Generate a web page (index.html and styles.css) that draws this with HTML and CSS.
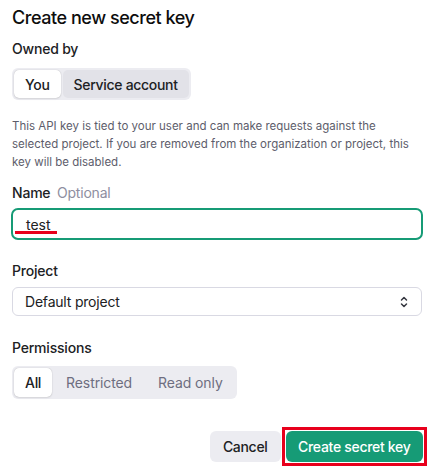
FILE: index.html
```html
<!DOCTYPE html>
<html>
<head>
<meta charset="utf-8">
<link rel="stylesheet" href="styles.css">
</head>
<body>
<div class="modal">
  <h1 class="title">Create new secret key</h1>
  <div class="label owned">Owned by</div>
  <div class="seg seg-owner">
    <button class="seg-btn active">You</button>
    <button class="seg-btn hover">Service account</button>
  </div>
  <p class="desc">This API key is tied to your user and can make requests against the selected project. If you are removed from the organization or project, this key will be disabled.</p>
  <div class="label name-label">Name <span class="optional">Optional</span></div>
  <div class="input focused">
    <span class="value">test</span>
    <span class="mark"></span>
  </div>
  <div class="label project-label">Project</div>
  <div class="select">
    <span>Default project</span>
    <svg class="chev" width="10" height="14" viewBox="0 0 10 14" fill="none" stroke="#353740" stroke-width="1.5" stroke-linecap="round" stroke-linejoin="round"><path d="M2.5 5 L5 2.5 L7.5 5"/><path d="M2.5 9 L5 11.5 L7.5 9"/></svg>
  </div>
  <div class="label perm-label">Permissions</div>
  <div class="seg seg-perm">
    <button class="seg-btn active">All</button>
    <button class="seg-btn muted">Restricted</button>
    <button class="seg-btn muted">Read only</button>
  </div>
  <div class="actions">
    <button class="btn cancel">Cancel</button>
    <div class="highlight"><button class="btn primary">Create secret key</button></div>
  </div>
</div>
</body>
</html>
```

FILE: styles.css
```css
* { box-sizing: border-box; }
html, body { margin: 0; padding: 0; background: #fff; }
body {
  font-family: Inter, "Noto Sans", "Liberation Sans", sans-serif;
  color: #0d0d0d;
  width: 440px;
  height: 473px;
  overflow: hidden;
}
.modal {
  padding: 5px 17px 0 12px;
  display: flex;
  flex-direction: column;
  align-items: flex-start;
}
.title {
  margin: 0;
  font-size: 18px;
  line-height: 26px;
  font-weight: 500;
  letter-spacing: -0.45px;
}
.label {
  font-size: 14px;
  line-height: 20px;
  font-weight: 500;
  color: #202123;
  letter-spacing: -0.2px;
}
.owned { margin-top: 8px; }
.seg {
  display: flex;
  background: #ececf1;
  border-radius: 6px;
  padding: 2px;
  gap: 2px;
}
.seg-owner { margin-top: 9px; }
.seg-btn {
  border: 0;
  background: transparent;
  font-family: inherit;
  font-size: 14px;
  font-weight: 500;
  letter-spacing: -0.3px;
  color: #202123;
  height: 28px;
  padding: 0 11px;
  border-radius: 5px;
  cursor: pointer;
}
.seg-btn.active {
  background: #fff;
  box-shadow: 0 0 1px rgba(0,0,0,0.25), 0 1px 2px rgba(0,0,0,0.08);
}
.seg-btn.hover { background: #e2e2e8; }
.seg-btn.muted { color: #6e6e80; font-weight: 400; letter-spacing: -0.1px; padding: 0 12px; }
.desc {
  margin: 17px 0 0;
  max-width: 405px;
  font-size: 11.5px;
  line-height: 18px;
  color: #5d5d6b;
}
.name-label { margin-top: 12px; }
.optional { color: #8e8ea0; font-weight: 400; margin-left: 3px; }
.input {
  margin-top: 5px;
  margin-left: -1px;
  width: 412px;
  height: 32px;
  border: 2px solid #169b76;
  border-radius: 7px;
  position: relative;
  display: flex;
  align-items: center;
  padding-left: 13px;
  font-size: 14px;
  color: #202123;
}
.mark {
  position: absolute;
  left: 2px;
  top: 21px;
  width: 42px;
  height: 3px;
  background: #e8001c;
}
.project-label { margin-top: 21px; }
.perm-label { margin-top: 22px; }
.select {
  margin-top: 6px;
  width: 410px;
  height: 29px;
  border: 1px solid #d9d9e3;
  border-radius: 6px;
  display: flex;
  align-items: center;
  justify-content: space-between;
  padding: 0 12px 0 12px;
  font-size: 14px;
  color: #202123;
  letter-spacing: -0.2px;
}
.seg-perm { margin-top: 8px; }
.seg-perm .seg-btn { height: 29px; }
.actions {
  align-self: stretch;
  margin-top: 28px;
  display: flex;
  justify-content: flex-end;
  align-items: center;
  gap: 1px;
  margin-right: -4px;
}
.btn {
  border: 0;
  font-family: inherit;
  font-size: 14px;
  font-weight: 500;
  letter-spacing: -0.3px;
  height: 31px;
  border-radius: 6px;
  cursor: pointer;
}
.cancel {
  background: #ececf1;
  color: #202123;
  padding: 0 13px;
}
.highlight {
  border: 3px solid #e8001c;
  padding: 1px;
}
.primary {
  background: #169b76;
  color: #fff;
  padding: 0 12.5px;
  display: block;
}
```
